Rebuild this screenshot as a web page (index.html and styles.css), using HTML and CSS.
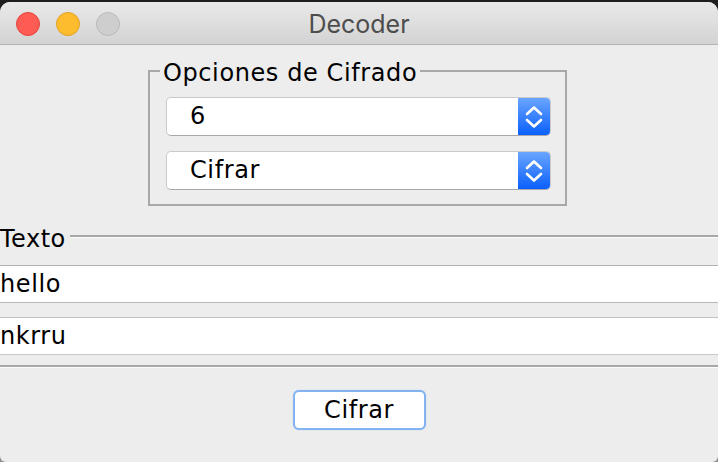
FILE: index.html
```html
<!DOCTYPE html>
<html lang="es">
<head>
<meta charset="utf-8">
<title>Decoder</title>
<link rel="stylesheet" href="styles.css">
</head>
<body>
<div class="window">
  <header class="titlebar">
    <div class="lights">
      <span class="light close"></span>
      <span class="light min"></span>
      <span class="light zoom"></span>
    </div>
    <div class="title">Decoder</div>
    <div></div>
  </header>
  <main class="content">
    <fieldset class="options">
      <legend>Opciones de Cifrado</legend>
      <div class="combo">
        <span class="combo-value">6</span>
        <span class="combo-arrows">
          <svg width="32" height="37" viewBox="0 0 32 37"><path d="M9 16 L16 9.5 L23 16 M9 22 L16 28.5 L23 22" fill="none" stroke="#fff" stroke-width="2.6" stroke-linecap="round" stroke-linejoin="round"/></svg>
        </span>
      </div>
      <div class="combo">
        <span class="combo-value">Cifrar</span>
        <span class="combo-arrows">
          <svg width="32" height="37" viewBox="0 0 32 37"><path d="M9 16 L16 9.5 L23 16 M9 22 L16 28.5 L23 22" fill="none" stroke="#fff" stroke-width="2.6" stroke-linecap="round" stroke-linejoin="round"/></svg>
        </span>
      </div>
    </fieldset>
    <section class="text-group">
      <div class="text-head">
        <span class="text-title">Texto</span>
        <span class="rule"></span>
      </div>
      <div class="field">hello</div>
      <div class="field field-second">nkrru</div>
    </section>
    <div class="actions">
      <button class="btn" type="button">Cifrar</button>
    </div>
  </main>
</div>
</body>
</html>
```

FILE: styles.css
```css
* { box-sizing: border-box; }

html {
  background: linear-gradient(#1e1e1e 0, #1e1e1e 50%, #8f8f8f 50%, #8f8f8f 100%);
}

body {
  margin: 0;
  font-family: "DejaVu Sans", sans-serif;
  color: #000;
}

.window {
  margin-top: 2px;
  height: 460px;
  background: #ededed;
  border-radius: 10px 10px 6px 6px;
  overflow: hidden;
}

.titlebar {
  height: 43px;
  padding-top: 2px;
  border-bottom: 1px solid #b3b3b3;
  background: linear-gradient(#e9e9e9, #d3d3d3);
  display: grid;
  grid-template-columns: 1fr auto 1fr;
  align-items: center;
}

.lights {
  display: flex;
  gap: 16px;
  padding-left: 16px;
}

.light {
  width: 24px;
  height: 24px;
  border-radius: 50%;
}

.close { background: #fd5b53; border: 1px solid #e2453e; }
.min { background: #fdbb2e; border: 1px solid #e0a024; }
.zoom { background: #cecece; border: 1px solid #b9b9b9; }

.title {
  font-family: Inter, "Liberation Sans", sans-serif;
  font-size: 25px;
  color: #4d4d4d;
}

.content {
  background: #ededed;
}

.options {
  margin: 9px 0 0 148px;
  width: 419px;
  min-width: 0;
  padding: 9px 14px 14px 10px;
  border: 2px solid #a8a8a8;
}

.options legend {
  padding: 4px 3px 0;
  font-size: 24px;
  line-height: 30px;
  letter-spacing: 0.6px;
}

.combo {
  margin-left: 6px;
  width: 385px;
  height: 39px;
  display: flex;
  background: #fff;
  border: 1px solid #cacaca;
  border-bottom-color: #a9a9a9;
  border-radius: 5px;
  overflow: hidden;
}

.combo + .combo { margin-top: 15px; }

.combo-value {
  flex: 1;
  padding-left: 23px;
  font-size: 24px;
  line-height: 37px;
  letter-spacing: 0.6px;
}

.combo-arrows {
  width: 32px;
  display: flex;
  background: linear-gradient(#6aa5ff, #0a60fb);
}

.text-group {
  margin-top: 18px;
  padding-bottom: 10px;
  border-bottom: 2px solid #a8a8a8;
  box-shadow: 0 1px 0 #fbfbfb;
}

.text-head {
  display: flex;
  height: 30px;
}

.text-title {
  font-size: 24px;
  line-height: 30px;
  letter-spacing: 0.5px;
}

.rule {
  flex: 1;
  height: 2px;
  margin: 11px 0 0 4px;
  background: #a8a8a8;
  box-shadow: 0 1px 0 #fbfbfb;
}

.field {
  margin-top: 11px;
  height: 38px;
  padding-top: 1px;
  background: #fff;
  border-top: 1px solid #b3b3b3;
  border-bottom: 1px solid #b8b8b8;
  font-size: 24px;
  line-height: 35px;
  letter-spacing: 0.6px;
}

.field-second {
  margin-top: 14px;
  border-top-color: #c2c2c2;
  border-bottom-color: #c8c8c8;
}

.actions {
  display: flex;
  justify-content: center;
  padding-top: 23px;
}

.btn {
  width: 133px;
  height: 40px;
  padding: 0;
  background: #fff;
  border: 2px solid #84b3f2;
  border-radius: 6px;
  box-shadow: 0 0 1px #9cc3f5;
  font-family: "DejaVu Sans", sans-serif;
  font-size: 24px;
  line-height: 36px;
  letter-spacing: 0.6px;
  color: #000;
}
```
